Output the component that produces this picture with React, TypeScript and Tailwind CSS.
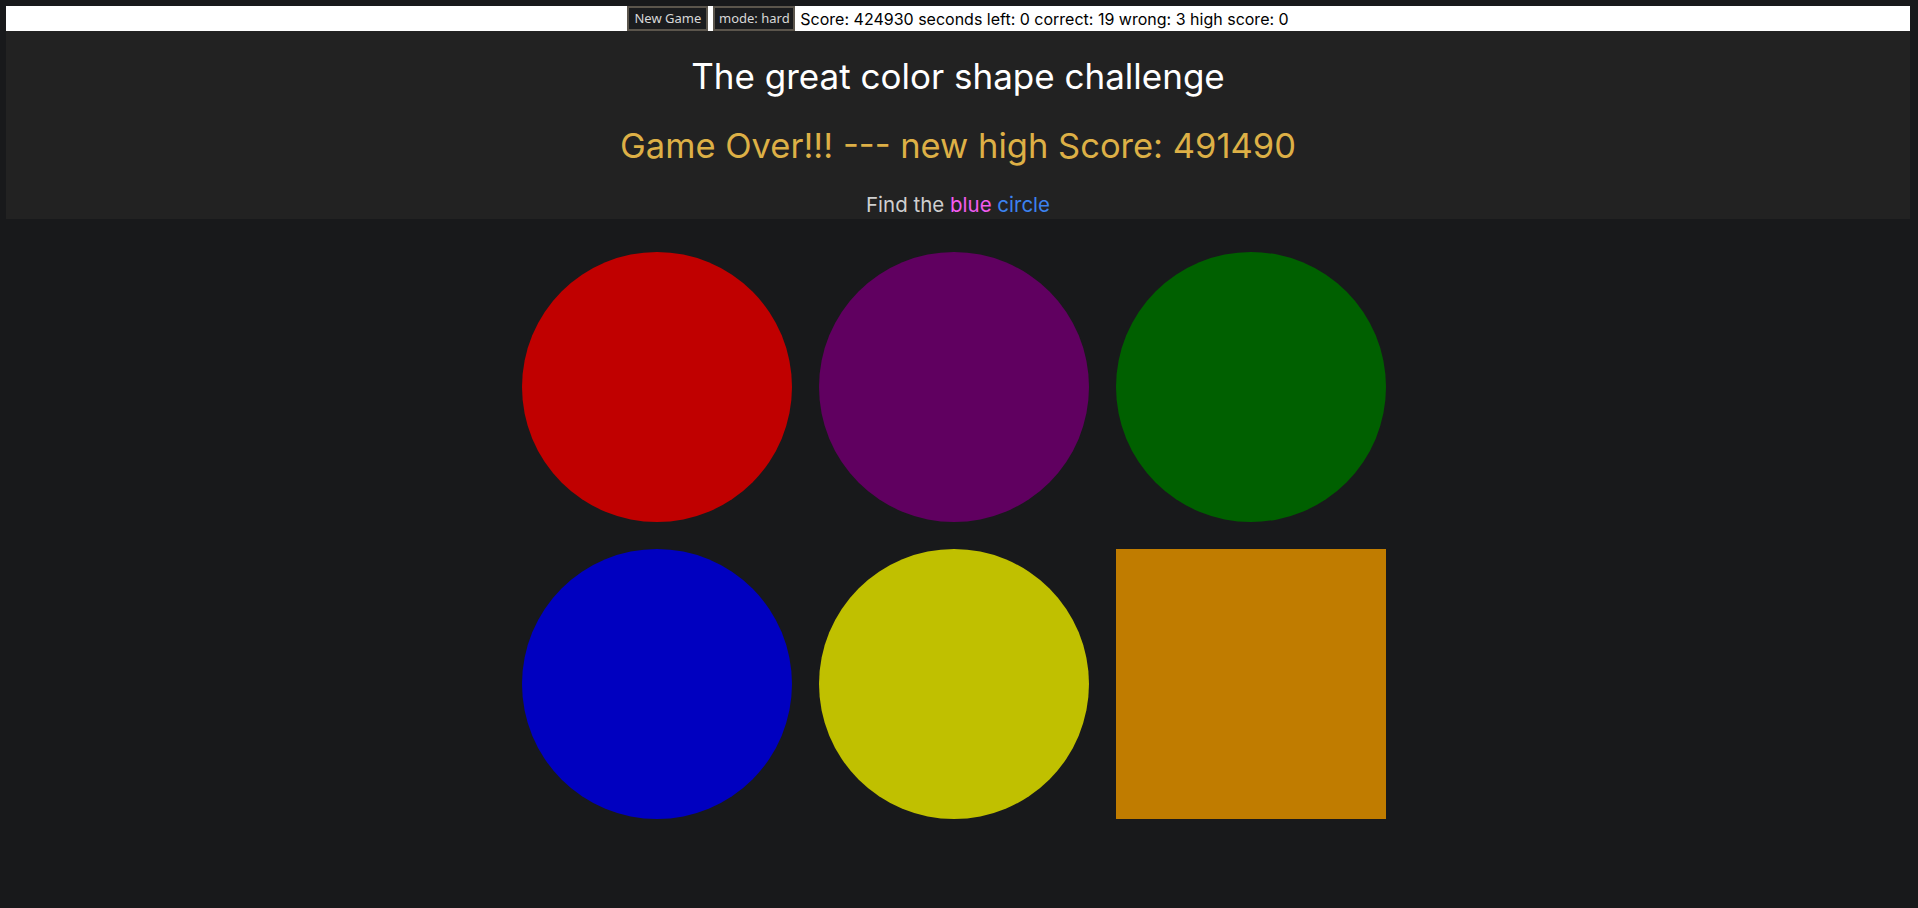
import React from 'react';

// shapes on the board, in reading order
const shapes = [
    { id: 1, kind: 'circle', color: 'bg-[#c00000]' },
    { id: 2, kind: 'circle', color: 'bg-[#600060]' },
    { id: 3, kind: 'circle', color: 'bg-[#006000]' },
    { id: 4, kind: 'circle', color: 'bg-[#0000c0]' },
    { id: 5, kind: 'circle', color: 'bg-[#c0c000]' },
    { id: 6, kind: 'square', color: 'bg-[#c07c00]' },
];

const stats = {
    score: 424930,
    secondsLeft: 0,
    correct: 19,
    wrong: 3,
    highScore: 0,
};

export default function App() {
    return (
        <div className="min-h-[908px] bg-[#18191b] pt-[6px] font-['Inter','Open_Sans',sans-serif]">
            <div className="mx-[6px] mr-[8px]">
                {/* Toolbar */}
                <div className="h-[25px] bg-white flex items-stretch justify-center gap-[5px]">
                    <button className="w-[81px] border-2 border-[#5b554c] bg-[#1b1c1e] text-[#d8d8d8] text-[13px] font-['Noto_Sans',sans-serif] leading-none">
                        New Game
                    </button>
                    <button className="w-[82px] border-2 border-[#5b554c] bg-[#1b1c1e] text-[#d8d8d8] text-[13px] font-['Noto_Sans',sans-serif] leading-none">
                        mode: hard
                    </button>
                    <div className="flex items-center text-[16px] text-black">
                        Score: {stats.score} seconds left: {stats.secondsLeft} correct: {stats.correct} wrong: {stats.wrong} high score: {stats.highScore}
                    </div>
                </div>

                {/* Header */}
                <div className="h-[188px] bg-[#222222] flex flex-col items-center pt-[25px]">
                    <h1 className="text-[35px] leading-[40px] text-white">The great color shape challenge</h1>
                    <h2 className="mt-[30px] text-[34.5px] leading-[40px] text-[#ddb046]">Game Over!!! --- new high Score: 491490</h2>
                    <p className="mt-[27px] text-[20.5px] leading-[24px] text-[#cfcfcf]">
                        Find the <span className="text-[#f25cf0]">blue</span> <span className="text-[#3c82f0]">circle</span>
                    </p>
                </div>
            </div>

            {/* Board */}
            <div className="flex justify-center pr-[10px] pt-[33px]">
                <div className="grid grid-cols-3 gap-[27px]">
                    {shapes.map(s => (
                        <div
                            key={s.id}
                            className={`w-[270px] h-[270px] ${s.kind === 'circle' ? 'rounded-full' : ''} ${s.color}`}
                        />
                    ))}
                </div>
            </div>
        </div>
    );
}
